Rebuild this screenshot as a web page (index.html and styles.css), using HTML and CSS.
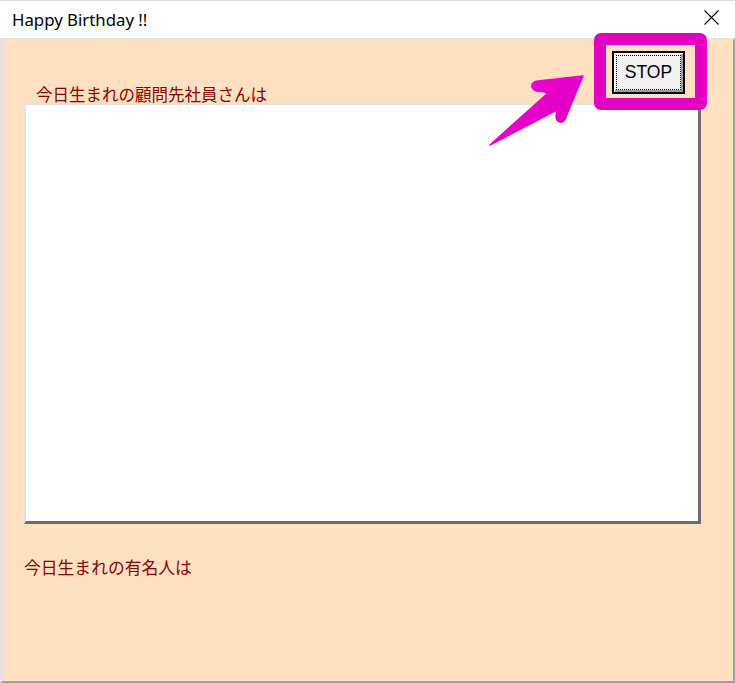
FILE: index.html
```html
<!DOCTYPE html>
<html>
<head>
  <meta charset="UTF-8" />
  <title>Happy Birthday !!</title>
  <link rel="stylesheet" href="styles.css">
</head>
<body>

  <!-- Window title bar -->
  <div class="titlebar">
    <span class="title">Happy Birthday !!</span>
    <svg class="close-icon" width="15" height="15" viewBox="0 0 15 15">
      <path d="M0.5 0.5 L14.5 14.5 M14.5 0.5 L0.5 14.5" stroke="#000" stroke-width="1.1" fill="none" />
    </svg>
  </div>

  <!-- Form body -->
  <div class="panel">
    <div class="top-row">
      <span class="label label-top">今日生まれの顧問先社員さんは</span>
      <button class="stop"><span class="focus">STOP</span></button>
    </div>

    <div class="listbox"></div>

    <div class="label label-bottom">今日生まれの有名人は</div>
  </div>

  <!-- Annotation over the screenshot -->
  <div class="highlight"></div>
  <svg class="arrow" width="105" height="80" viewBox="0 0 105 80">
    <defs>
      <linearGradient id="arrowFill" x1="0" y1="0" x2="1" y2="1">
        <stop offset="0" stop-color="#ee10d4" />
        <stop offset="0.5" stop-color="#e600c8" />
        <stop offset="1" stop-color="#d400b4" />
      </linearGradient>
    </defs>
    <path d="M98 6 L53 11 Q46 12 47 17 Q49 22 55 21 L63 23 L5 75 L72 40 L71 47 Q72 53 77 52 Q80 51 81 47 Z"
          fill="url(#arrowFill)" stroke="url(#arrowFill)" stroke-width="1.5" stroke-linejoin="round" />
  </svg>

</body>
</html>
```

FILE: styles.css
```css
body {
  margin: 0;
  width: 735px;
  height: 683px;
  position: relative;
  overflow: hidden;
  background: white;
  font-family: "Noto Sans", sans-serif;
}

.titlebar {
  height: 37px;
  border-top: 1px solid #d9d9d9;
  display: flex;
  justify-content: space-between;
  align-items: center;
  padding: 0 16px 0 12px;
}

.title {
  font-size: 16.8px;
  color: #000;
  margin-top: -1px;
}

.close-icon {
  display: block;
  margin-top: -4px;
}

.panel {
  box-sizing: border-box;
  width: 735px;
  height: 645px;
  background: #ffe0c0;
  border-top: 2px solid #e3e3e3;
  border-left: 3px solid #e3e3e3;
  border-right: 2px solid #a0a0a0;
  border-bottom: 2px solid #a0a0a0;
  padding: 11px 0 0 21px;
}

.label {
  font-family: "Noto Sans CJK JP", sans-serif;
  font-size: 16.5px;
  line-height: 18px;
  color: #8b0000;
}

.top-row {
  display: flex;
  justify-content: space-between;
  align-items: flex-start;
  margin-right: 48px;
}

.label-top {
  margin-top: 34px;
  padding-left: 12px;
}

.stop {
  box-sizing: border-box;
  width: 73px;
  height: 43px;
  padding: 2px;
  background: #f0f0f0;
  border: 2px solid #000;
  border-radius: 0;
  box-shadow: inset 1px 1px 0 #fff, inset -2px -2px 0 #a0a0a0;
  font-family: "Liberation Sans", sans-serif;
  font-size: 17.5px;
  color: #000;
  cursor: pointer;
}

.focus {
  display: flex;
  justify-content: center;
  align-items: center;
  height: 100%;
  border: 1px dotted #000;
  box-sizing: border-box;
}

.listbox {
  box-sizing: border-box;
  width: 677px;
  height: 421px;
  background: white;
  border-top: 2px solid #e3e3e3;
  border-left: 2px solid #e3e3e3;
  border-right: 3px solid #6d6d6d;
  border-bottom: 3px solid #6d6d6d;
}

.label-bottom {
  margin-top: 34px;
  font-size: 16.8px;
}

/* Annotation */
.highlight {
  position: absolute;
  left: 594px;
  top: 33px;
  width: 113px;
  height: 77px;
  box-sizing: border-box;
  border: 12px solid #e300c3;
  border-radius: 7px;
}

.arrow {
  position: absolute;
  left: 485px;
  top: 70px;
}
```
